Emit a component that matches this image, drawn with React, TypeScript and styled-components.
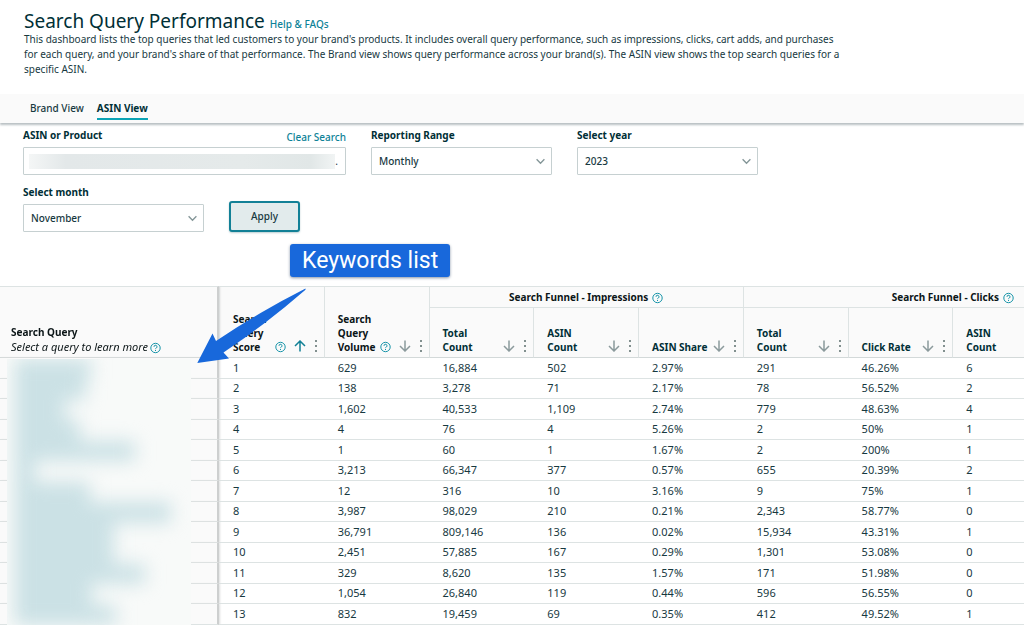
import React from "react";
import styled, { createGlobalStyle, css } from "styled-components";

const ink = "#17393f";
const dark = "#002f36";
const teal = "#0d8297";
const line = "#dde3e3";

const GlobalStyle = createGlobalStyle`
  * { box-sizing: border-box; }
  body {
    margin: 0;
    background: #fff;
    color: ${ink};
    font-family: "Noto Sans", "Open Sans", sans-serif;
    font-size: 10px;
    line-height: 15px;
  }
  button, input, select { font: inherit; color: inherit; }
`;

const Page = styled.div`
  overflow: hidden;
`;

const Header = styled.header`
  padding: 11px 24px 17px;
`;

const TitleRow = styled.div`
  display: flex;
  align-items: baseline;
  gap: 5px;
  height: 21px;
`;

const Title = styled.h1`
  margin: 0;
  font-size: 19px;
  line-height: 20px;
  font-weight: 400;
  color: ${dark};
`;

const TextLink = styled.a`
  color: ${teal};
  font-weight: 500;
  text-decoration: none;
`;

const Intro = styled.p`
  margin: 0;
  max-width: 824px;
`;

const Tabs = styled.nav`
  display: flex;
  gap: 13px;
  height: 29px;
  padding: 7px 30px 0;
  background: #fafafa;
  box-shadow: 0 2px 2px #b9c0c3;
`;

const Tab = styled.a<{ $active?: boolean }>`
  height: 19px;
  color: ${ink};
  font-weight: 500;
  text-decoration: none;
  ${(p) =>
    p.$active &&
    css`
      color: ${dark};
      font-weight: 700;
      border-bottom: 2px solid #0aa3b5;
    `}
`;

const Filters = styled.form`
  display: flex;
  flex-wrap: wrap;
  align-items: flex-end;
  gap: 10px 25px;
  max-width: 784px;
  padding: 5px 23px 0;
`;

const Field = styled.div<{ $wide?: boolean }>`
  width: ${(p) => (p.$wide ? 323 : 181)}px;
`;

const FieldHead = styled.div`
  display: flex;
  justify-content: space-between;
  align-items: center;
  height: 19px;
`;

const Label = styled.label`
  height: 19px;
  color: ${dark};
  font-weight: 700;
`;

const Control = styled.div`
  position: relative;
`;

const boxStyle = css`
  display: block;
  width: 100%;
  height: 28px;
  padding: 0 7px;
  border: 1px solid #c6d0d1;
  border-radius: 1px;
  background: #fff;
`;

const TextBox = styled.input`
  ${boxStyle}
  text-align: right;
`;

const Redacted = styled.span`
  position: absolute;
  inset: 7px 11px 6px 6px;
  background: linear-gradient(90deg, #f4f6f6, #e3e8e9 12%, #e5eaea 70%, #e1e7e7 92%, #f1f4f4);
`;

const SelectBox = styled.select`
  ${boxStyle}
  appearance: none;
  font-weight: 500;
`;

const Chevron = styled.svg`
  position: absolute;
  right: 7px;
  top: 11px;
  pointer-events: none;
`;

const Apply = styled.button`
  width: 71px;
  height: 31px;
  border: 2px solid #128096;
  border-radius: 3px;
  background: #e2ebec;
  box-shadow: 0 1px 2px #b9cfd2;
  font-weight: 500;
`;

const Report = styled.section`
  position: relative;
  margin-top: 54px;
`;

const Scroller = styled.div`
  overflow: hidden;
`;

const Table = styled.table`
  width: 100%;
  min-width: 1162px;
  table-layout: fixed;
  border-collapse: separate;
  border-spacing: 0;
`;

const GroupHead = styled.th`
  height: 22px;
  padding: 0;
  border-top: 1px solid ${line};
  border-bottom: 1px solid ${line};
  border-left: 1px solid ${line};
  background: #fafafa;
  color: #0b1517;
  line-height: 14px;
`;

const GroupLabel = styled.div`
  display: flex;
  justify-content: center;
  align-items: center;
  gap: 4px;
`;

const ColumnHead = styled.th<{ $black?: boolean; $top?: boolean }>`
  height: 50px;
  padding: 0 6px 3px 13px;
  vertical-align: bottom;
  text-align: left;
  border-left: 1px solid ${line};
  border-bottom: 1px solid #d3d9d9;
  ${(p) => p.$top && css`border-top: 1px solid ${line};`}
  background: #fafafa;
  color: ${(p) => (p.$black ? "#0b1517" : dark)};
  line-height: 14px;
`;

const HeadLine = styled.div`
  display: flex;
  align-items: flex-end;
  gap: 8px;
`;

const HeadText = styled.span`
  flex: 1 1 0;
  min-width: 0;
  white-space: pre;
`;

const stuck = css`
  position: sticky;
  left: 0;
  z-index: 1;
  background: #fafafa;
  border-right: 2px solid #cdcfcf;
  box-shadow: 1px 0 2px #dcdede;
`;

const QueryHead = styled.th`
  ${stuck}
  padding: 0 0 3px 11px;
  vertical-align: bottom;
  text-align: left;
  border-top: 1px solid ${line};
  border-bottom: 1px solid #d3d9d9;
  color: #0b1517;
  line-height: 14px;
`;

const Hint = styled.div`
  display: flex;
  align-items: center;
  gap: 2px;
  height: 15px;
  font-size: 11px;
  font-weight: 400;
  font-style: italic;
`;

const Row = styled.tr`
  height: 21px;
  &:nth-child(even) { height: 20px; }
`;

const Cell = styled.td`
  padding: 0 0 2px 14px;
  border-bottom: 1px solid ${line};
  font-size: 11px;
  line-height: 15px;
`;

const QueryCell = styled.td`
  ${stuck}
  padding: 0;
  border-bottom: 1px solid ${line};
`;

const IconButton = styled.button`
  display: flex;
  flex: none;
  height: 16px;
  padding: 0;
  align-items: center;
  border: 0;
  background: none;
`;

const Veil = styled.div`
  position: absolute;
  z-index: 2;
  left: 7px;
  top: 73px;
  bottom: 0;
  width: 184px;
  padding-left: 8px;
  overflow: hidden;
  background: #f8faf9;
`;

const Smudges = styled.div`
  display: flex;
  flex-direction: column;
  height: 100%;
  filter: blur(9px);
`;

const Smudge = styled.div`
  flex: 1;
  background: #cbe1e5;
`;

const Arrow = styled.svg`
  position: absolute;
  z-index: 3;
  left: 190px;
  top: 0;
`;

const Callout = styled.div`
  position: absolute;
  z-index: 3;
  left: 290px;
  top: -42px;
  padding: 0 12px;
  border-radius: 3px;
  background: #1868db;
  box-shadow: 0 1px 3px #8795a8;
  color: #fff;
  font-family: Roboto, sans-serif;
  font-size: 23px;
  line-height: 33px;
`;

const Help = () => (
  <svg width="11" height="16" viewBox="0 0 11 16" fill="none" stroke="#1593a8" aria-hidden="true">
    <circle cx="5.5" cy="9" r="4.7" />
    <path d="M4 7.800a1.500 1.500 0 1 1 2.300 1.200c-.6.4-.8.6-.8 1.100M5.500 11v1" />
  </svg>
);

const SortArrow = ({ up }: { up?: boolean }) => (
  <svg width="12" height="12" viewBox="0 0 12 12" fill="none" stroke={up ? "#128096" : "#8b9a9c"} strokeWidth="1.5">
    <path d={up ? "M6 11.5V1M1 6l5-5 5 5" : "M6 .5V11M1 6l5 5 5-5"} />
  </svg>
);

const Dots = () => (
  <svg width="4" height="12" viewBox="0 0 4 12" fill="#82908f">
    <rect x="1" y="0" width="2" height="2" />
    <rect x="1" y="5" width="2" height="2" />
    <rect x="1" y="10" width="2" height="2" />
  </svg>
);

type HeadProps = { text: string; help?: boolean; up?: boolean };

const HeadContent = ({ text, help, up }: HeadProps) => (
  <HeadLine>
    <HeadText>{text}</HeadText>
    {help && <Help />}
    <IconButton type="button" aria-label="Sort"><SortArrow up={up} /></IconButton>
    <IconButton type="button" aria-label="Column menu"><Dots /></IconButton>
  </HeadLine>
);

type SelectFieldProps = { id: string; label: string; value: string };

const SelectField = ({ id, label, value }: SelectFieldProps) => (
  <Field>
    <FieldHead><Label htmlFor={id}>{label}</Label></FieldHead>
    <Control>
      <SelectBox id={id} defaultValue={value}><option>{value}</option></SelectBox>
      <Chevron width="9" height="7" viewBox="0 0 9 7" fill="none" stroke="#849698" strokeWidth="1.3">
        <path d="M.6 1.2 4.5 5.3 8.4 1.2" />
      </Chevron>
    </Control>
  </Field>
);

const columns = ["Total\nCount", "ASIN\nCount", "ASIN Share", "Total\nCount", "Click Rate", "ASIN\nCount"];

const rows = [
  ["1", "629", "16,884", "502", "2.97%", "291", "46.26%", "6"],
  ["2", "138", "3,278", "71", "2.17%", "78", "56.52%", "2"],
  ["3", "1,602", "40,533", "1,109", "2.74%", "779", "48.63%", "4"],
  ["4", "4", "76", "4", "5.26%", "2", "50%", "1"],
  ["5", "1", "60", "1", "1.67%", "2", "200%", "1"],
  ["6", "3,213", "66,347", "377", "0.57%", "655", "20.39%", "2"],
  ["7", "12", "316", "10", "3.16%", "9", "75%", "1"],
  ["8", "3,987", "98,029", "210", "0.21%", "2,343", "58.77%", "0"],
  ["9", "36,791", "809,146", "136", "0.02%", "15,934", "43.31%", "1"],
  ["10", "2,451", "57,885", "167", "0.29%", "1,301", "53.08%", "0"],
  ["11", "329", "8,620", "135", "1.57%", "171", "51.98%", "0"],
  ["12", "1,054", "26,840", "119", "0.44%", "596", "56.55%", "0"],
  ["13", "832", "19,459", "69", "0.35%", "412", "49.52%", "1"],
];

const queryLengths = [76, 71, 50, 65, 120, 20, 75, 156, 99, 99, 130, 77, 101];

export default function App() {
  return (
    <Page>
      <GlobalStyle />
      <Header>
        <TitleRow>
          <Title>Search Query Performance</Title>
          <TextLink href="#help">Help &amp; FAQs</TextLink>
        </TitleRow>
        <Intro>
          This dashboard lists the top queries that led customers to your brand's products. It includes overall query
          performance, such as impressions, clicks, cart adds, and purchases for each query, and your brand's share of
          that performance. The Brand view shows query performance across your brand(s). The ASIN view shows the top
          search queries for a specific ASIN.
        </Intro>
      </Header>
      <Tabs>
        <Tab href="#brand">Brand View</Tab>
        <Tab href="#asin" $active>ASIN View</Tab>
      </Tabs>
      <Filters onSubmit={(e) => e.preventDefault()}>
        <Field $wide>
          <FieldHead>
            <Label htmlFor="asin">ASIN or Product</Label>
            <TextLink href="#clear">Clear Search</TextLink>
          </FieldHead>
          <Control>
            <TextBox id="asin" defaultValue="." />
            <Redacted />
          </Control>
        </Field>
        <SelectField id="range" label="Reporting Range" value="Monthly" />
        <SelectField id="year" label="Select year" value="2023" />
        <SelectField id="month" label="Select month" value="November" />
        <Apply type="submit">Apply</Apply>
      </Filters>
      <Report>
        <Scroller>
          <Table>
            <colgroup>
              <col style={{ width: 219 }} />
              <col span={9} />
            </colgroup>
            <thead>
              <tr>
                <QueryHead rowSpan={2}>
                  Search Query
                  <Hint>Select a query to learn more <Help /></Hint>
                </QueryHead>
                <ColumnHead rowSpan={2} $black $top><HeadContent text={"Search\nQuery\nScore"} help up /></ColumnHead>
                <ColumnHead rowSpan={2} $black $top><HeadContent text={"Search\nQuery\nVolume"} help /></ColumnHead>
                <GroupHead colSpan={3}><GroupLabel>Search Funnel - Impressions <Help /></GroupLabel></GroupHead>
                <GroupHead colSpan={4}><GroupLabel>Search Funnel - Clicks <Help /></GroupLabel></GroupHead>
              </tr>
              <tr>
                {columns.map((text, i) => (
                  <ColumnHead key={i}><HeadContent text={text} /></ColumnHead>
                ))}
                <ColumnHead />
              </tr>
            </thead>
            <tbody>
              {rows.map((row) => (
                <Row key={row[0]}>
                  <QueryCell />
                  {row.map((value, i) => <Cell key={i}>{value}</Cell>)}
                  <Cell />
                </Row>
              ))}
            </tbody>
          </Table>
        </Scroller>
        <Veil>
          <Smudges>
            {queryLengths.map((length, i) => <Smudge key={i} style={{ width: length }} />)}
          </Smudges>
        </Veil>
        <Arrow width="120" height="80" viewBox="0 0 120 80" fill="#1868db" aria-hidden="true">
          <path d="M115.500 2.500Q69 26 26 55L22.500 47.500 7.300 77 39 72.500 33.500 66.500Q75 39 115.500 3.800Z" />
        </Arrow>
        <Callout>Keywords list</Callout>
      </Report>
    </Page>
  );
}
